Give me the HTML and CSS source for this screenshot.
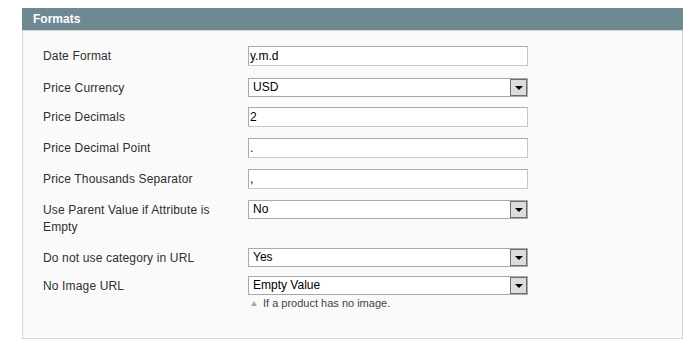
FILE: index.html
```html
<!DOCTYPE html>
<html>
<head>
<meta charset="utf-8">
<link rel="stylesheet" href="styles.css">
</head>
<body>
<div class="panel">
  <div class="panel-head">Formats</div>
  <div class="panel-body">
    <div class="row gap-12">
      <div class="label">Date Format</div>
      <div class="value"><div class="input">y.m.d</div></div>
    </div>
    <div class="row gap-10">
      <div class="label">Price Currency</div>
      <div class="value"><div class="select"><span class="sel-text">USD</span><span class="sel-btn"><i class="caret"></i></span></div></div>
    </div>
    <div class="row">
      <div class="label">Price Decimals</div>
      <div class="value"><div class="input">2</div></div>
    </div>
    <div class="row">
      <div class="label">Price Decimal Point</div>
      <div class="value"><div class="input">.</div></div>
    </div>
    <div class="row">
      <div class="label">Price Thousands Separator</div>
      <div class="value"><div class="input">,</div></div>
    </div>
    <div class="row gap-12">
      <div class="label">Use Parent Value if Attribute is Empty</div>
      <div class="value"><div class="select"><span class="sel-text">No</span><span class="sel-btn"><i class="caret"></i></span></div></div>
    </div>
    <div class="row gap-9">
      <div class="label">Do not use category in URL</div>
      <div class="value"><div class="select"><span class="sel-text">Yes</span><span class="sel-btn"><i class="caret"></i></span></div></div>
    </div>
    <div class="row last">
      <div class="label">No Image URL</div>
      <div class="value">
        <div class="select"><span class="sel-text">Empty Value</span><span class="sel-btn"><i class="caret"></i></span></div>
        <p class="note"><i class="note-arrow"></i>If a product has no image.</p>
      </div>
    </div>
  </div>
</div>
</body>
</html>
```

FILE: styles.css
```css
html, body {
  margin: 0;
  padding: 0;
  background: #ffffff;
}
body {
  font-family: "Liberation Sans", Arial, sans-serif;
  font-size: 12px;
  color: #2f2f2f;
}
.panel {
  margin: 8px 17px 0 22px;
  width: 661px;
}
.panel-head {
  height: 22px;
  line-height: 22px;
  background: #6f8992;
  color: #ffffff;
  font-weight: bold;
  font-size: 12px;
  padding-left: 11px;
}
.panel-body {
  background: #fafafa;
  border: 1px solid #d6d6d6;
  padding: 15px 20px 28px 20px;
}
.row {
  display: flex;
  align-items: flex-start;
  margin-bottom: 11px;
}
.row.gap-12 { margin-bottom: 12px; }
.row.gap-10 { margin-bottom: 10px; }
.row.gap-9 { margin-bottom: 9px; }
.row.last { margin-bottom: 0; }
.label {
  width: 195px;
  padding-right: 10px;
  padding-top: 2px;
  line-height: 17px;
  letter-spacing: 0.15px;
}
.value {
  width: 280px;
}
.input {
  box-sizing: border-box;
  height: 20px;
  width: 280px;
  border: 1px solid;
  border-color: #aaaaaa #c8c8c8 #c8c8c8 #aaaaaa;
  background: #ffffff;
  padding: 0 2px 0 1px;
  line-height: 18px;
  color: #000000;
}
.select {
  box-sizing: border-box;
  display: flex;
  height: 19px;
  width: 280px;
  border: 1px solid #a8a8a8;
  background: #ffffff;
  color: #000000;
}
.sel-text {
  flex: 1;
  padding-left: 4px;
  line-height: 17px;
}
.sel-btn {
  box-sizing: border-box;
  width: 17px;
  height: 17px;
  border: 1px solid #6e6e6e;
  background: #dcdcdc;
  display: flex;
  align-items: center;
  justify-content: center;
}
.caret {
  width: 0;
  height: 0;
  border-left: 4px solid transparent;
  border-right: 4px solid transparent;
  border-top: 4px solid #000000;
  margin-top: 1px;
}
.note {
  margin: 1px 0 0 0;
  font-size: 11px;
  line-height: 14px;
  color: #444444;
  display: flex;
  align-items: center;
}
.note-arrow {
  width: 0;
  height: 0;
  border-left: 3px solid transparent;
  border-right: 3px solid transparent;
  border-bottom: 5px solid #a9a9a9;
  margin: 0 6px 0 3px;
}
```
